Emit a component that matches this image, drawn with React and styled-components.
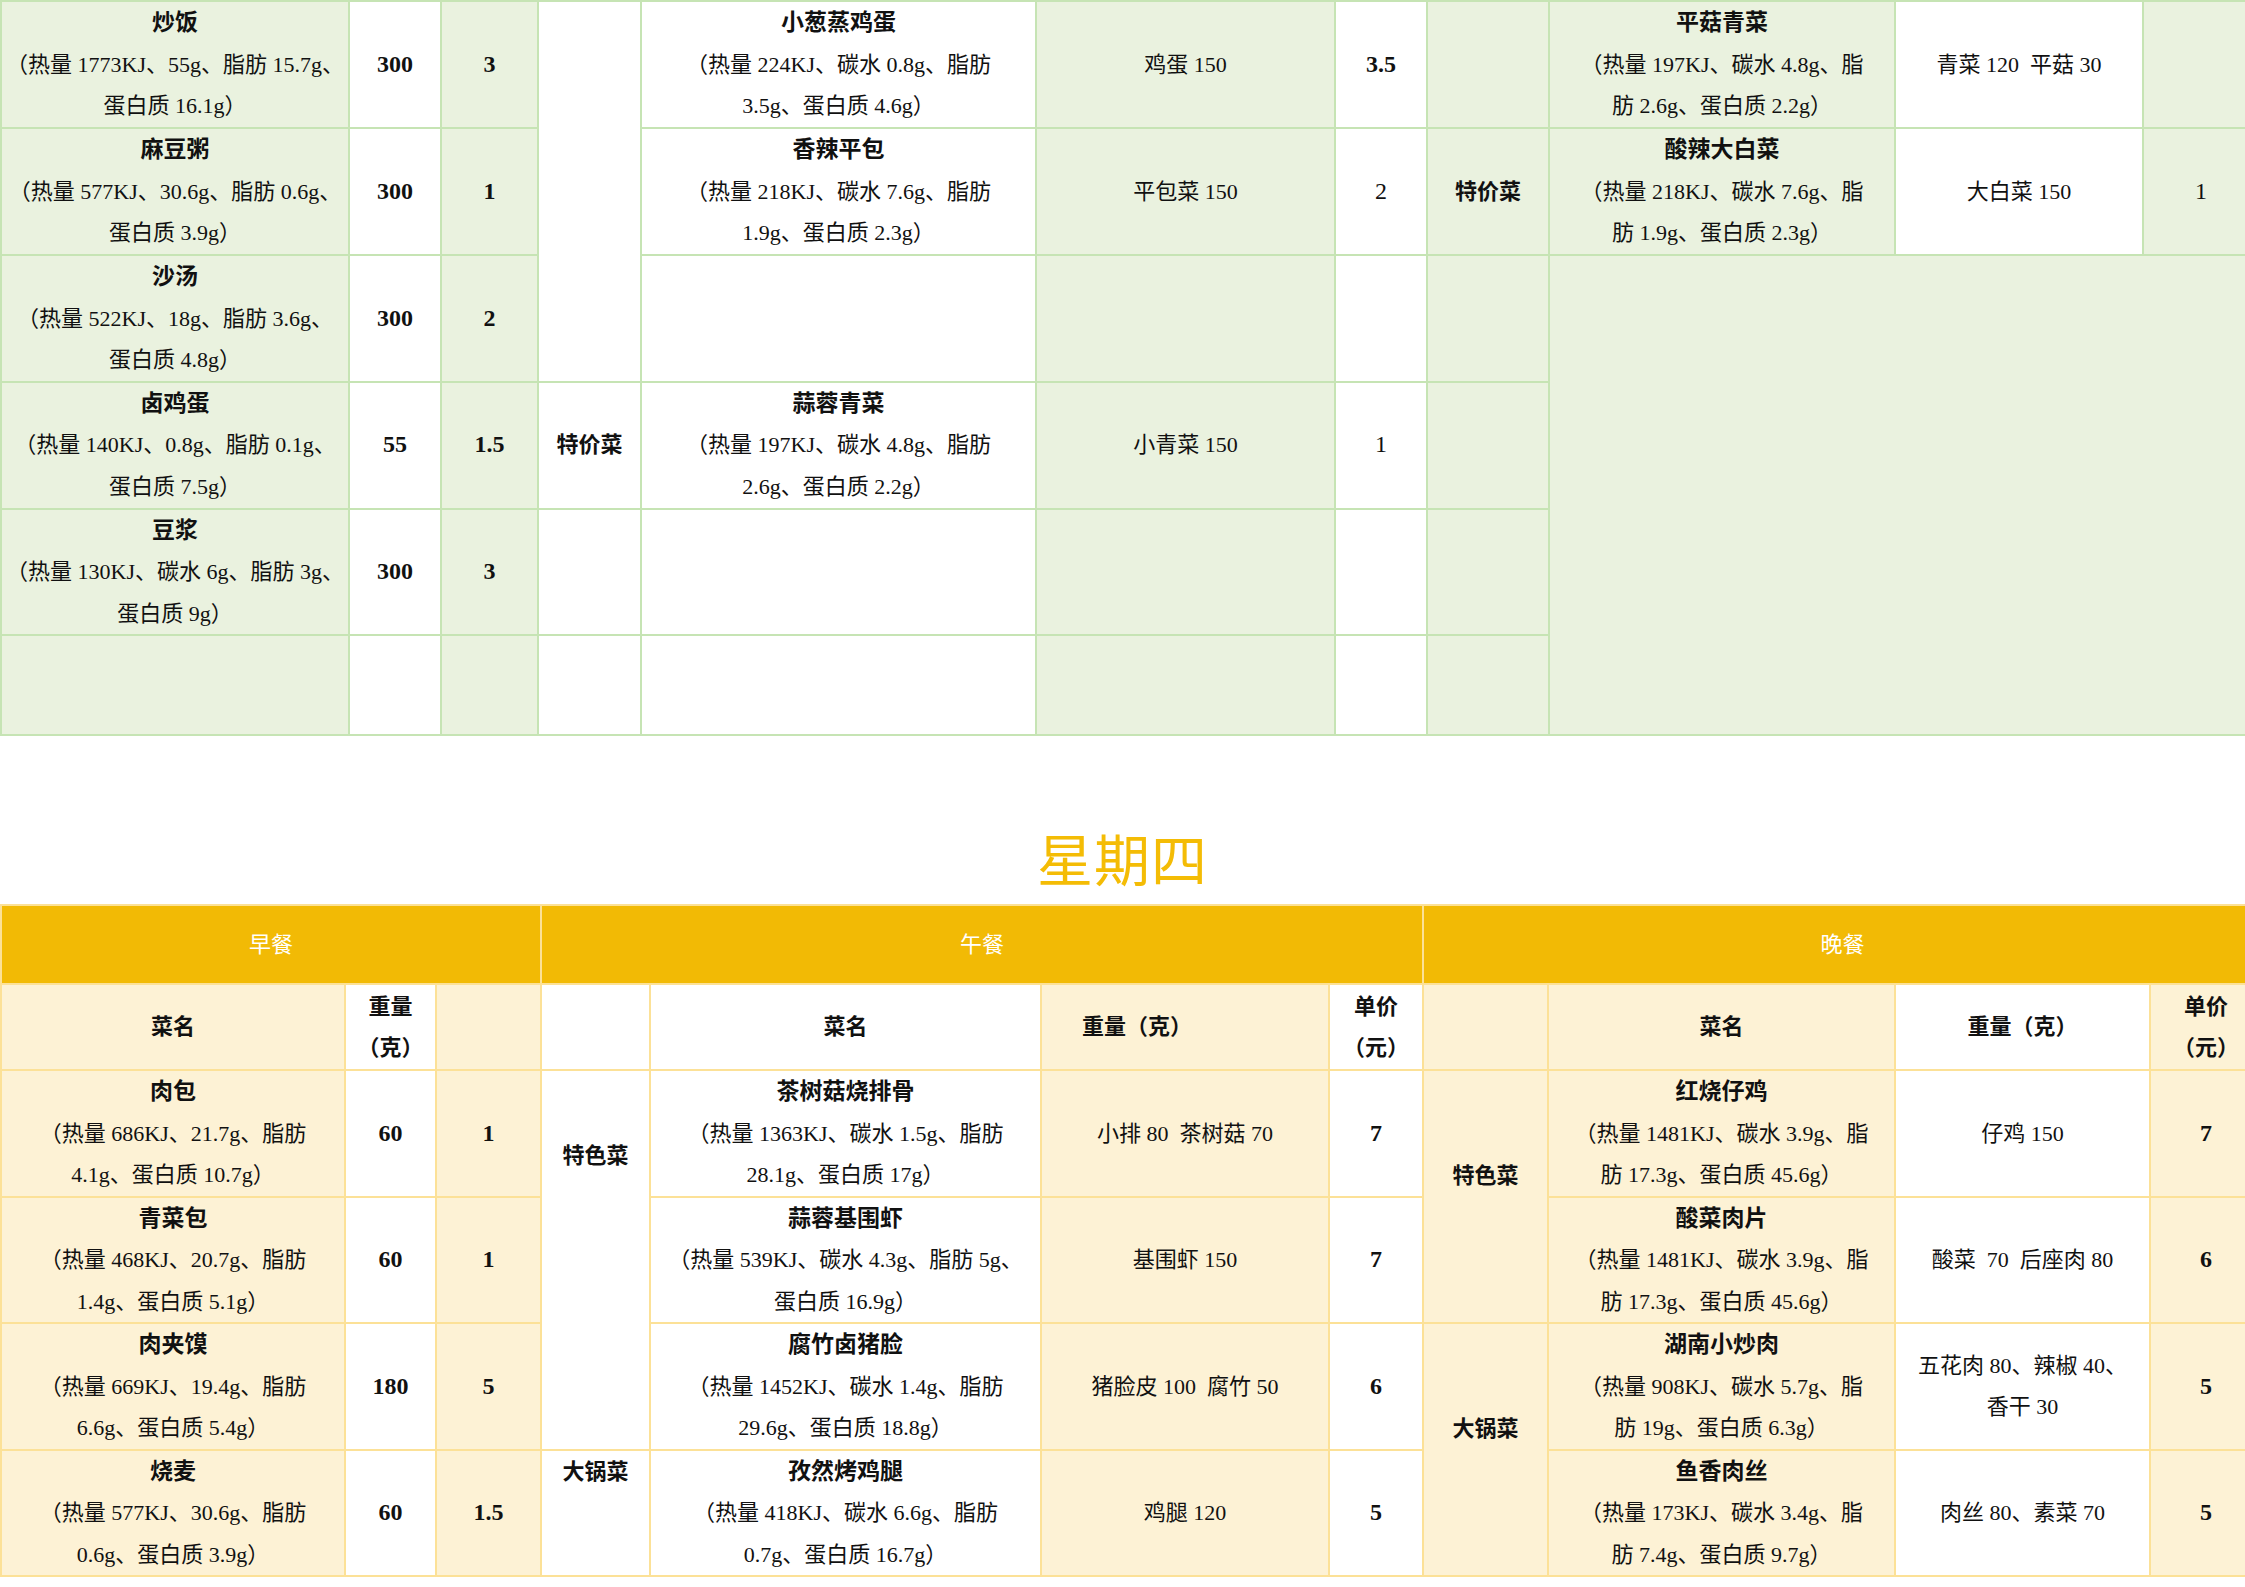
import React from "react";
import styled, { createGlobalStyle, ThemeProvider } from "styled-components";

const Global = createGlobalStyle`
  html, body { margin: 0; padding: 0; background: #fff; overflow: hidden; }
  body {
    font-family: "Liberation Serif", "Noto Sans CJK SC", serif;
    color: #111;
  }
`;

const greenTheme = { line: "#C6E4B4", tint: "#EAF2DF", head: "#C6E4B4" };
const goldTheme = { line: "#FCE197", tint: "#FDF2D5", head: "#F2BA05" };

const Page = styled.div`
  display: flex;
  flex-direction: column;
  width: 2245px;
`;

const Sheet = styled.table`
  border-collapse: collapse;
  table-layout: fixed;
  width: ${(p) => p.$w}px;
  font-size: 22px;
  line-height: 41.5px;
`;

const Col = styled.col`
  width: ${(p) => p.$w}px;
`;

const Row = styled.tr`
  height: ${(p) => p.$h}px;
`;

const Cell = styled.td`
  border: 2px solid ${(p) => p.theme.line};
  background: ${(p) => (p.$head ? p.theme.head : p.$fill ? p.theme.tint : "#fff")};
  color: ${(p) => (p.$head ? "#fff" : "#111")};
  font-weight: ${(p) => (p.$bold ? 700 : 400)};
  font-size: ${(p) => (p.$num ? 24 : 22)}px;
  text-align: ${(p) => (p.$left ? "left" : "center")};
  vertical-align: middle;
  padding: 0 2px ${(p) => (p.$lift || 0) * 2}px ${(p) => (p.$left ? 40 : 2)}px;
  white-space: pre;
  overflow: visible;
`;

const Name = styled.div`
  font-weight: 700;
  font-size: 23px;
  line-height: 41.5px;
`;

const Line = styled.div`
  line-height: 41.5px;
  white-space: pre;
`;

const TitleBar = styled.div`
  height: 168px;
  display: flex;
  align-items: flex-end;
  justify-content: center;
  padding-bottom: 19px;
  box-sizing: border-box;
  font-family: "Noto Sans CJK SC", "Liberation Sans", sans-serif;
  font-size: 56px;
  line-height: 56px;
  color: #F4BC05;
  letter-spacing: 1px;
`;

function Dish({ name, lines, fill }) {
  return (
    <Cell $fill={fill}>
      <Name>{name}</Name>
      {lines.map((t) => (
        <Line key={t}>{t}</Line>
      ))}
    </Cell>
  );
}

function Lines({ lines, ...rest }) {
  return (
    <Cell {...rest}>
      {lines.map((t, i) => (
        <Line key={i}>{t}</Line>
      ))}
    </Cell>
  );
}

const topCols = [348, 92, 97, 103, 395, 299, 92, 122, 346, 248, 116];
const botCols = [344, 91, 105, 109, 391, 288, 94, 125, 347, 255, 112];
const sum = (a) => a.reduce((s, v) => s + v, 0);

function TopTable() {
  return (
    <ThemeProvider theme={greenTheme}>
      <Sheet $w={sum(topCols)}>
        <colgroup>
          {topCols.map((w, i) => (
            <Col key={i} $w={w} />
          ))}
        </colgroup>
        <tbody>
          <Row $h={127}>
            <Dish fill name="炒饭" lines={["（热量 1773KJ、55g、脂肪 15.7g、", "蛋白质 16.1g）"]} />
            <Cell $bold $num>300</Cell>
            <Cell $fill $bold $num>3</Cell>
            <Cell rowSpan={3} />
            <Dish name="小葱蒸鸡蛋" lines={["（热量 224KJ、碳水 0.8g、脂肪", "3.5g、蛋白质 4.6g）"]} />
            <Cell $fill>鸡蛋 150</Cell>
            <Cell $bold $num>3.5</Cell>
            <Cell $fill />
            <Dish fill name="平菇青菜" lines={["（热量 197KJ、碳水 4.8g、脂", "肪 2.6g、蛋白质 2.2g）"]} />
            <Cell>{"青菜 120  平菇 30"}</Cell>
            <Cell $fill />
          </Row>
          <Row $h={127}>
            <Dish fill name="麻豆粥" lines={["（热量 577KJ、30.6g、脂肪 0.6g、", "蛋白质 3.9g）"]} />
            <Cell $bold $num>300</Cell>
            <Cell $fill $bold $num>1</Cell>
            <Dish name="香辣平包" lines={["（热量 218KJ、碳水 7.6g、脂肪", "1.9g、蛋白质 2.3g）"]} />
            <Cell $fill>平包菜 150</Cell>
            <Cell $num>2</Cell>
            <Cell $fill $bold>特价菜</Cell>
            <Dish fill name="酸辣大白菜" lines={["（热量 218KJ、碳水 7.6g、脂", "肪 1.9g、蛋白质 2.3g）"]} />
            <Cell>大白菜 150</Cell>
            <Cell $fill $num>1</Cell>
          </Row>
          <Row $h={126}>
            <Dish fill name="沙汤" lines={["（热量 522KJ、18g、脂肪 3.6g、", "蛋白质 4.8g）"]} />
            <Cell $bold $num>300</Cell>
            <Cell $fill $bold $num>2</Cell>
            <Cell />
            <Cell $fill />
            <Cell />
            <Cell $fill />
            <Cell $fill colSpan={3} rowSpan={4} />
          </Row>
          <Row $h={127}>
            <Dish fill name="卤鸡蛋" lines={["（热量 140KJ、0.8g、脂肪 0.1g、", "蛋白质 7.5g）"]} />
            <Cell $bold $num>55</Cell>
            <Cell $fill $bold $num>1.5</Cell>
            <Cell $bold>特价菜</Cell>
            <Dish name="蒜蓉青菜" lines={["（热量 197KJ、碳水 4.8g、脂肪", "2.6g、蛋白质 2.2g）"]} />
            <Cell $fill>小青菜 150</Cell>
            <Cell $num>1</Cell>
            <Cell $fill />
          </Row>
          <Row $h={126}>
            <Dish fill name="豆浆" lines={["（热量 130KJ、碳水 6g、脂肪 3g、", "蛋白质 9g）"]} />
            <Cell $bold $num>300</Cell>
            <Cell $fill $bold $num>3</Cell>
            <Cell />
            <Cell />
            <Cell $fill />
            <Cell />
            <Cell $fill />
          </Row>
          <Row $h={100}>
            <Cell $fill />
            <Cell />
            <Cell $fill />
            <Cell />
            <Cell />
            <Cell $fill />
            <Cell />
            <Cell $fill />
          </Row>
        </tbody>
      </Sheet>
    </ThemeProvider>
  );
}

function BottomTable() {
  return (
    <ThemeProvider theme={goldTheme}>
      <Sheet $w={sum(botCols)}>
        <colgroup>
          {botCols.map((w, i) => (
            <Col key={i} $w={w} />
          ))}
        </colgroup>
        <tbody>
          <Row $h={79}>
            <Cell $head colSpan={3}>早餐</Cell>
            <Cell $head colSpan={4}>午餐</Cell>
            <Cell $head colSpan={4}>晚餐</Cell>
          </Row>
          <Row $h={86}>
            <Cell $fill $bold>菜名</Cell>
            <Lines $bold lines={["重量", "（克）"]} />
            <Cell $fill />
            <Cell />
            <Cell $bold>菜名</Cell>
            <Cell $fill $bold $left>重量（克）</Cell>
            <Lines $bold lines={["单价", "（元）"]} />
            <Cell $fill />
            <Cell $fill $bold>菜名</Cell>
            <Cell $bold>重量（克）</Cell>
            <Lines $fill $bold lines={["单价", "（元）"]} />
          </Row>
          <Row $h={126.5}>
            <Dish fill name="肉包" lines={["（热量 686KJ、21.7g、脂肪", "4.1g、蛋白质 10.7g）"]} />
            <Cell $bold $num>60</Cell>
            <Cell $fill $bold $num>1</Cell>
            <Cell rowSpan={3} $bold $lift={104}>特色菜</Cell>
            <Dish name="茶树菇烧排骨" lines={["（热量 1363KJ、碳水 1.5g、脂肪", "28.1g、蛋白质 17g）"]} />
            <Cell $fill>{"小排 80  茶树菇 70"}</Cell>
            <Cell $bold $num>7</Cell>
            <Cell $fill rowSpan={2} $bold $lift={21}>特色菜</Cell>
            <Dish fill name="红烧仔鸡" lines={["（热量 1481KJ、碳水 3.9g、脂", "肪 17.3g、蛋白质 45.6g）"]} />
            <Cell>仔鸡 150</Cell>
            <Cell $fill $bold $num>7</Cell>
          </Row>
          <Row $h={126.5}>
            <Dish fill name="青菜包" lines={["（热量 468KJ、20.7g、脂肪", "1.4g、蛋白质 5.1g）"]} />
            <Cell $bold $num>60</Cell>
            <Cell $fill $bold $num>1</Cell>
            <Dish name="蒜蓉基围虾" lines={["（热量 539KJ、碳水 4.3g、脂肪 5g、", "蛋白质 16.9g）"]} />
            <Cell $fill>基围虾 150</Cell>
            <Cell $bold $num>7</Cell>
            <Dish fill name="酸菜肉片" lines={["（热量 1481KJ、碳水 3.9g、脂", "肪 17.3g、蛋白质 45.6g）"]} />
            <Cell>{"酸菜  70  后座肉 80"}</Cell>
            <Cell $fill $bold $num>6</Cell>
          </Row>
          <Row $h={126.5}>
            <Dish fill name="肉夹馍" lines={["（热量 669KJ、19.4g、脂肪", "6.6g、蛋白质 5.4g）"]} />
            <Cell $bold $num>180</Cell>
            <Cell $fill $bold $num>5</Cell>
            <Dish name="腐竹卤猪脸" lines={["（热量 1452KJ、碳水 1.4g、脂肪", "29.6g、蛋白质 18.8g）"]} />
            <Cell $fill>{"猪脸皮 100  腐竹 50"}</Cell>
            <Cell $bold $num>6</Cell>
            <Cell $fill rowSpan={2} $bold $lift={21}>大锅菜</Cell>
            <Dish fill name="湖南小炒肉" lines={["（热量 908KJ、碳水 5.7g、脂", "肪 19g、蛋白质 6.3g）"]} />
            <Lines lines={["五花肉 80、辣椒 40、", "香干 30"]} />
            <Cell $fill $bold $num>5</Cell>
          </Row>
          <Row $h={126.5}>
            <Dish fill name="烧麦" lines={["（热量 577KJ、30.6g、脂肪", "0.6g、蛋白质 3.9g）"]} />
            <Cell $bold $num>60</Cell>
            <Cell $fill $bold $num>1.5</Cell>
            <Cell $bold $lift={41}>大锅菜</Cell>
            <Dish name="孜然烤鸡腿" lines={["（热量 418KJ、碳水 6.6g、脂肪", "0.7g、蛋白质 16.7g）"]} />
            <Cell $fill>鸡腿 120</Cell>
            <Cell $bold $num>5</Cell>
            <Dish fill name="鱼香肉丝" lines={["（热量 173KJ、碳水 3.4g、脂", "肪 7.4g、蛋白质 9.7g）"]} />
            <Cell>肉丝 80、素菜 70</Cell>
            <Cell $fill $bold $num>5</Cell>
          </Row>
        </tbody>
      </Sheet>
    </ThemeProvider>
  );
}

export default function App() {
  return (
    <>
      <Global />
      <Page>
        <TopTable />
        <TitleBar>星期四</TitleBar>
        <BottomTable />
      </Page>
    </>
  );
}
